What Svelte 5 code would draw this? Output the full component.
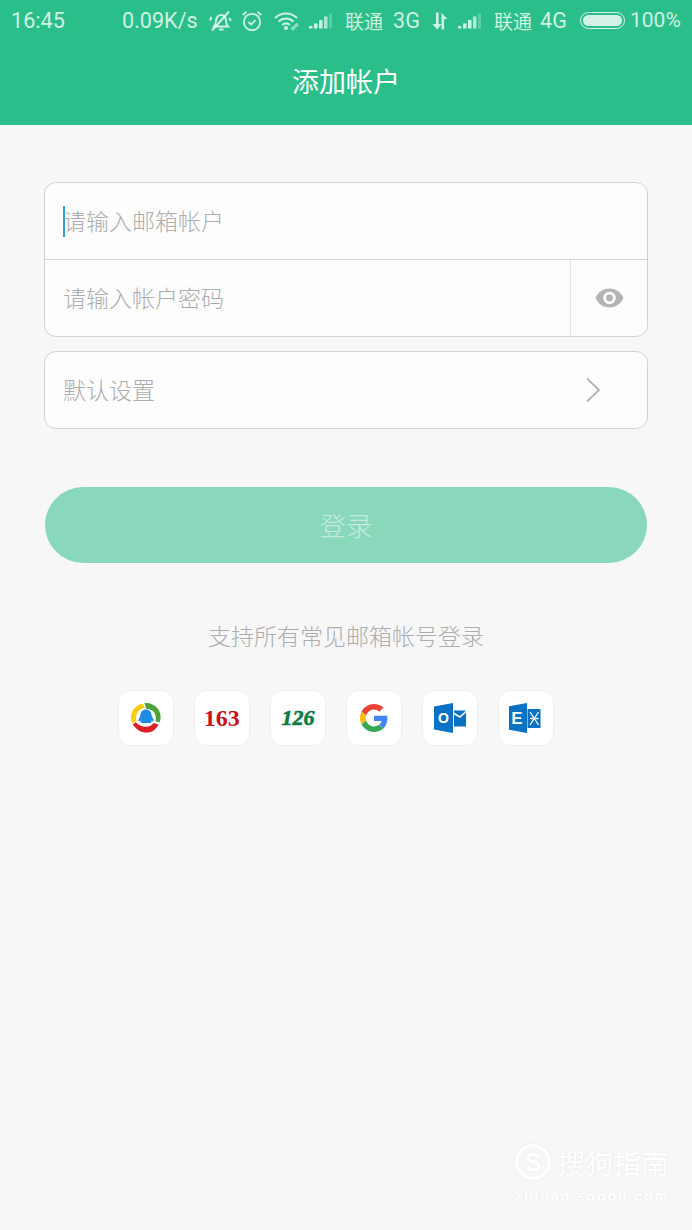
<script>
  // Providers shown under the login button
  const providers = ['qq', '163', '126', 'google', 'outlook', 'exchange'];
</script>

<div class="page">
  <header class="header">
    <div class="status">
      <span class="time">16:45</span>
      <span class="speed">0.09K/s</span>
      <svg class="ic-bell" width="23" height="22" viewBox="0 0 23 22" fill="none" stroke="currentColor" stroke-width="2">
        <path d="M5 16.500c1.500-1.500 1.800-3 2.100-6 .4-3.400 2.400-5.600 5-5.600s4.600 2.200 4.800 5.400c.2 3 .6 4.700 2.100 6.200z"/>
        <path d="M10 19.500h4.500M3 20.500 20 1.500M2.500 7 1 10.500M20.500 8l1.200 3"/>
      </svg>
      <svg class="ic-alarm" width="22" height="22" viewBox="0 0 22 22" fill="none" stroke="currentColor" stroke-width="1.800">
        <circle cx="11" cy="12" r="8.200"/>
        <path d="M7.500 12l2.700 2.500 4.300-4.500M1.800 5 5.500 1.800M20.200 5l-3.700-3.200"/>
      </svg>
      <svg class="ic-wifi" width="26" height="20" viewBox="0 0 26 20" fill="none" stroke="currentColor" stroke-width="2.200">
        <path d="M1 7c6.500-6 15.500-6 22 0M4.500 10.500c4.500-4 10.500-4 15 0M8 14c2.500-2 5.500-2 8 0"/>
        <circle cx="12" cy="17" r="2" fill="currentColor" stroke="none"/>
        <path d="M17.500 18.500 24 13" stroke-width="3.400" opacity=".6"/>
      </svg>
      <svg class="ic-signal" width="24" height="16" viewBox="0 0 24 16">
        <rect x="0" y="13" width="3.500" height="2.500" fill="currentColor"/>
        <rect x="5" y="10.500" width="3.500" height="5" fill="currentColor"/>
        <rect x="10" y="7" width="3.500" height="8.500" fill="currentColor"/>
        <rect x="15" y="3.500" width="3.500" height="12" fill="currentColor" opacity=".8"/>
        <rect x="20" y="0.500" width="3" height="15" fill="currentColor" opacity=".3"/>
      </svg>
      <span class="carrier first">联通</span>
      <span class="net n3g">3G</span>
      <svg class="ic-arrows" width="18" height="18" viewBox="0 0 18 18" fill="currentColor">
        <path d="M5 0.500h2.600v11.500h3L6.200 17.500 1.500 12h3.500zM10.500 17.500V1l6 6h-3.400v10.500z"/>
      </svg>
      <svg class="ic-signal two" width="24" height="16" viewBox="0 0 24 16">
        <rect x="0" y="13" width="3.500" height="2.500" fill="currentColor"/>
        <rect x="5" y="10.500" width="3.500" height="5" fill="currentColor"/>
        <rect x="10" y="7" width="3.500" height="8.500" fill="currentColor"/>
        <rect x="15" y="3.500" width="3.500" height="12" fill="currentColor" opacity=".8"/>
        <rect x="20" y="0.500" width="3" height="15" fill="currentColor" opacity=".3"/>
      </svg>
      <span class="carrier second">联通</span>
      <span class="net n4g">4G</span>
      <span class="battery"><span class="battery-fill"></span></span>
      <span class="percent">100%</span>
    </div>
    <h1 class="title">添加帐户</h1>
  </header>

  <main class="content">
    <div class="box">
      <div class="row">
        <span class="caret"></span>
        <span class="placeholder">请输入邮箱帐户</span>
      </div>
      <div class="row split">
        <span class="placeholder">请输入帐户密码</span>
        <button class="eye" aria-label="显示密码">
          <svg width="29" height="20" viewBox="0 0 29 20">
            <path fill-rule="evenodd" fill="#b4b4b4" d="M14.500 0.500C21 0.500 26 4.500 28.500 10 26 15.500 21 19.500 14.500 19.500S3 15.500 .5 10C3 4.500 8 .5 14.500 .5zM14.500 3.800a6.200 6.200 0 1 0 0 12.400 6.200 6.200 0 0 0 0-12.400z"/>
            <circle cx="14.500" cy="10" r="3.400" fill="#b4b4b4"/>
          </svg>
        </button>
      </div>
    </div>

    <div class="box single">
      <div class="row">
        <span class="placeholder">默认设置</span>
        <svg class="chevron" width="16" height="26" viewBox="0 0 16 26" fill="none" stroke="#b5b5b5" stroke-width="1.800">
          <path d="M2 1.500 14 13 2 24.500"/>
        </svg>
      </div>
    </div>

    <button class="login">登录</button>

    <p class="support">支持所有常见邮箱帐号登录</p>

    <div class="providers">
      {#each providers as p}
        <div class="provider">
          {#if p === 'qq'}
            <svg width="30" height="30" viewBox="0 0 30 30">
              <path d="M12 .5C4.500 1.800 0 8 0 14.500c0 2.200.5 4 1.300 5.700l4.200-2.400C4.800 15 5 11.800 6.500 9.300 8 6.800 10.500 5.500 13.500 5z" fill="#f5cf13"/>
              <path d="M13.500 0c7-.6 13.500 3.500 15.500 10 1.100 3.500.7 6.800-.4 9.500l-4.300-1.300c1-3 .6-6.200-1-8.500-2-2.800-5-4-8-3.700z" fill="#4ea43a"/>
              <path d="M1.800 21.200c3.500 6 9.500 9 15 8.300 5-.6 8.700-3.500 10.700-8l-4.800-1.500c-1.700 2.500-4.700 4-8.200 3.800-3.500-.2-6.700-1.300-9.700-4.500z" fill="#dc1f26"/>
              <path d="M15 6.500c3.300 0 5.300 2.400 5.500 5.300.1 1.500.8 2.700 1.700 4 .8 1.500.3 2.900-.5 2.500-.6-.3-1-.8-1.300-.8.300 1 .1 2-.8 2.500H10.400c-.9-.5-1.100-1.500-.8-2.500-.3 0-.7.500-1.300.8-.8.400-1.300-1-.5-2.500.9-1.300 1.600-2.500 1.700-4 .2-2.900 2.200-5.300 5.500-5.300z" fill="#1f8ce0"/>
            </svg>
          {:else if p === '163'}
            <span class="num red">163</span>
          {:else if p === '126'}
            <span class="num green">126</span>
          {:else if p === 'google'}
            <svg width="28" height="28" viewBox="0 0 48 48">
              <path fill="#ea4335" d="M24 9.500c3.500 0 6.700 1.200 9.200 3.600l6.900-6.900C35.900 2.400 30.500 0 24 0 14.600 0 6.500 5.400 2.600 13.200l8 6.200C12.500 13.700 17.800 9.500 24 9.500z"/>
              <path fill="#4285f4" d="M47 24.500c0-1.600-.1-3.100-.4-4.500H24v9h12.900c-.6 3-2.200 5.500-4.700 7.200l7.700 6c4.500-4.200 7.100-10.300 7.100-17.700z"/>
              <path fill="#fbbc05" d="M10.600 28.600c-.5-1.400-.8-3-.8-4.600s.3-3.200.8-4.600l-8-6.200C.9 16.500 0 20.100 0 24s.9 7.500 2.600 10.800z"/>
              <path fill="#34a853" d="M24 48c6.500 0 11.900-2.100 15.900-5.800l-7.700-6c-2.200 1.500-4.900 2.300-8.200 2.300-6.200 0-11.500-4.200-13.400-9.900l-8 6.200C6.500 42.600 14.600 48 24 48z"/>
            </svg>
          {:else if p === 'outlook'}
            <svg width="34" height="32" viewBox="0 0 34 32">
              <path d="M1 4.500 20 1v30L1 27.500z" fill="#0a72c4"/>
              <text x="10.500" y="20.500" text-anchor="middle" class="svg-letter" font-size="14">O</text>
              <path d="M21 8.500h12L27 14l-6-3.500zM21 12.500l6 3.500 6-5.500V24.500H21z" fill="#0a72c4"/>
            </svg>
          {:else}
            <svg width="34" height="32" viewBox="2 0 34 32">
              <path d="M1 4.500 20 1v30L1 27.500z" fill="#0a72c4"/>
              <text x="10" y="21.500" text-anchor="middle" class="svg-letter" font-size="17">E</text>
              <rect x="20.500" y="7" width="13" height="19" fill="#0a72c4"/>
              <path d="M23 10l8.500 13M31.500 10 23 23M23 16.500h3M28.500 16.500h3" fill="none" stroke="#fff" stroke-width="1.300"/>
            </svg>
          {/if}
        </div>
      {/each}
    </div>
  </main>

  <div class="watermark">
    <div class="mark-top">
      <span class="mark-logo">S</span>
      <span class="mark-name">搜狗指南</span>
    </div>
    <div class="mark-url">zhinan.sogou.com</div>
  </div>
</div>

<style>
  :global(body) {
    margin: 0;
    background: #f7f7f7;
  }

  .page {
    position: relative;
    width: 692px;
    height: 1230px;
    overflow: hidden;
    background: #f7f7f7;
    font-family: "Noto Sans CJK SC", "Noto Sans", sans-serif;
  }

  .header {
    height: 125px;
    background: #2abf8a;
    box-sizing: border-box;
  }

  .status {
    display: flex;
    align-items: center;
    height: 41px;
    color: rgba(255, 255, 255, 0.78);
    font-family: Roboto, "Noto Sans CJK SC", sans-serif;
    font-size: 21.600px;
    line-height: 1;
    white-space: nowrap;
  }

  .status svg { flex: none; }

  .time { margin-left: 11px; width: 54px; }
  .speed { margin-left: 57px; width: 76px; }
  .ic-bell { margin-left: 11px; }
  .ic-alarm { margin-left: 9px; }
  .ic-wifi { margin-left: 11px; }
  .ic-signal { margin-left: 9px; }
  .carrier {
    font-family: "Noto Sans CJK SC", sans-serif;
    font-size: 19px;
    width: 38px;
  }
  .carrier.first { margin-left: 12px; }
  .net { width: 29px; }
  .n3g { margin-left: 10px; }
  .ic-arrows { margin-left: 9px; }
  .ic-signal.two { margin-left: 9px; }
  .carrier.second { margin-left: 12px; }
  .n4g { margin-left: 8px; }

  .battery {
    margin-left: 11px;
    width: 45px;
    height: 17px;
    box-sizing: border-box;
    border: 1.500px solid rgba(255, 255, 255, 0.8);
    border-radius: 9px;
    padding: 2px;
    display: flex;
  }

  .battery-fill {
    flex: 1;
    background: rgba(255, 255, 255, 0.8);
    border-radius: 6px;
  }

  .percent { margin-left: 5px; font-size: 21px; }

  .title {
    margin: 0;
    height: 84px;
    text-align: center;
    color: #fff;
    font-size: 27px;
    font-weight: 400;
    line-height: 80px;
  }

  .content {
    padding: 57px 44px 0;
  }

  .box {
    box-sizing: border-box;
    border: 1px solid #d2d2d2;
    border-radius: 12px;
    background: #fdfdfd;
    overflow: hidden;
  }

  .box.single {
    margin-top: 14px;
  }

  .row {
    position: relative;
    display: flex;
    align-items: center;
    height: 76px;
    padding-left: 18px;
  }

  .row.split {
    border-top: 1px solid #d8d8d8;
    justify-content: space-between;
  }

  .placeholder {
    font-size: 23px;
    font-weight: 300;
    color: #adadad;
    line-height: 1;
    position: relative;
    top: -1px;
  }

  .caret {
    position: absolute;
    left: 18px;
    top: 23px;
    width: 2px;
    height: 31px;
    background: #2a9fd8;
  }

  .eye {
    width: 77px;
    height: 100%;
    border: 0;
    border-left: 1px solid #e4e4e4;
    background: none;
    padding: 0;
    display: flex;
    align-items: center;
    justify-content: center;
  }

  .chevron {
    margin-left: auto;
    margin-right: 46px;
  }

  .login {
    display: block;
    width: 602px;
    height: 76px;
    margin: 58px 1px 0;
    border: 0;
    border-radius: 38px;
    background: #8ad8bc;
    color: #c4eddd;
    font-family: inherit;
    font-size: 26.500px;
    font-weight: 300;
    padding: 0 0 2px;
  }

  .support {
    margin: 55px 0 0;
    text-align: center;
    font-size: 23px;
    font-weight: 300;
    color: #adadad;
    line-height: 34px;
  }

  .providers {
    display: flex;
    justify-content: center;
    gap: 20.200px;
    margin-top: 38px;
    padding-right: 20px;
  }

  .provider {
    width: 56px;
    height: 56px;
    box-sizing: border-box;
    border: 1px solid #f0f0f0;
    border-radius: 13px;
    background: #fff;
    display: flex;
    align-items: center;
    justify-content: center;
  }

  .num {
    font-family: "Liberation Serif", serif;
    font-weight: 700;
    font-size: 24px;
    line-height: 1;
  }

  .red { color: #c9121c; }
  .green {
    color: #0c7c42;
    font-style: italic;
    font-size: 22px;
    -webkit-text-stroke: 0.6px #0c7c42;
  }

  .svg-letter {
    fill: #fff;
    font-family: "Liberation Sans", sans-serif;
    font-weight: 700;
  }

  /* site watermark sits over the page */
  .watermark {
    position: absolute;
    left: 515px;
    top: 1144px;
    width: 170px;
    color: #fff;
    text-shadow: 0 0 2px #e6e6e6;
  }

  .mark-top {
    display: flex;
    align-items: center;
  }

  .mark-logo {
    width: 36px;
    height: 36px;
    box-sizing: border-box;
    border: 3px solid #fff;
    box-shadow: 0 0 2px #e0e0e0;
    border-radius: 50%;
    font: 700 25px/30px "Liberation Sans", sans-serif;
    text-align: center;
  }

  .mark-name {
    margin-left: 6px;
    font-size: 28px;
    line-height: 36px;
  }

  .mark-url {
    margin-top: 8px;
    font: 700 14px/16px "Liberation Sans", sans-serif;
    letter-spacing: 1.950px;
  }
</style>
